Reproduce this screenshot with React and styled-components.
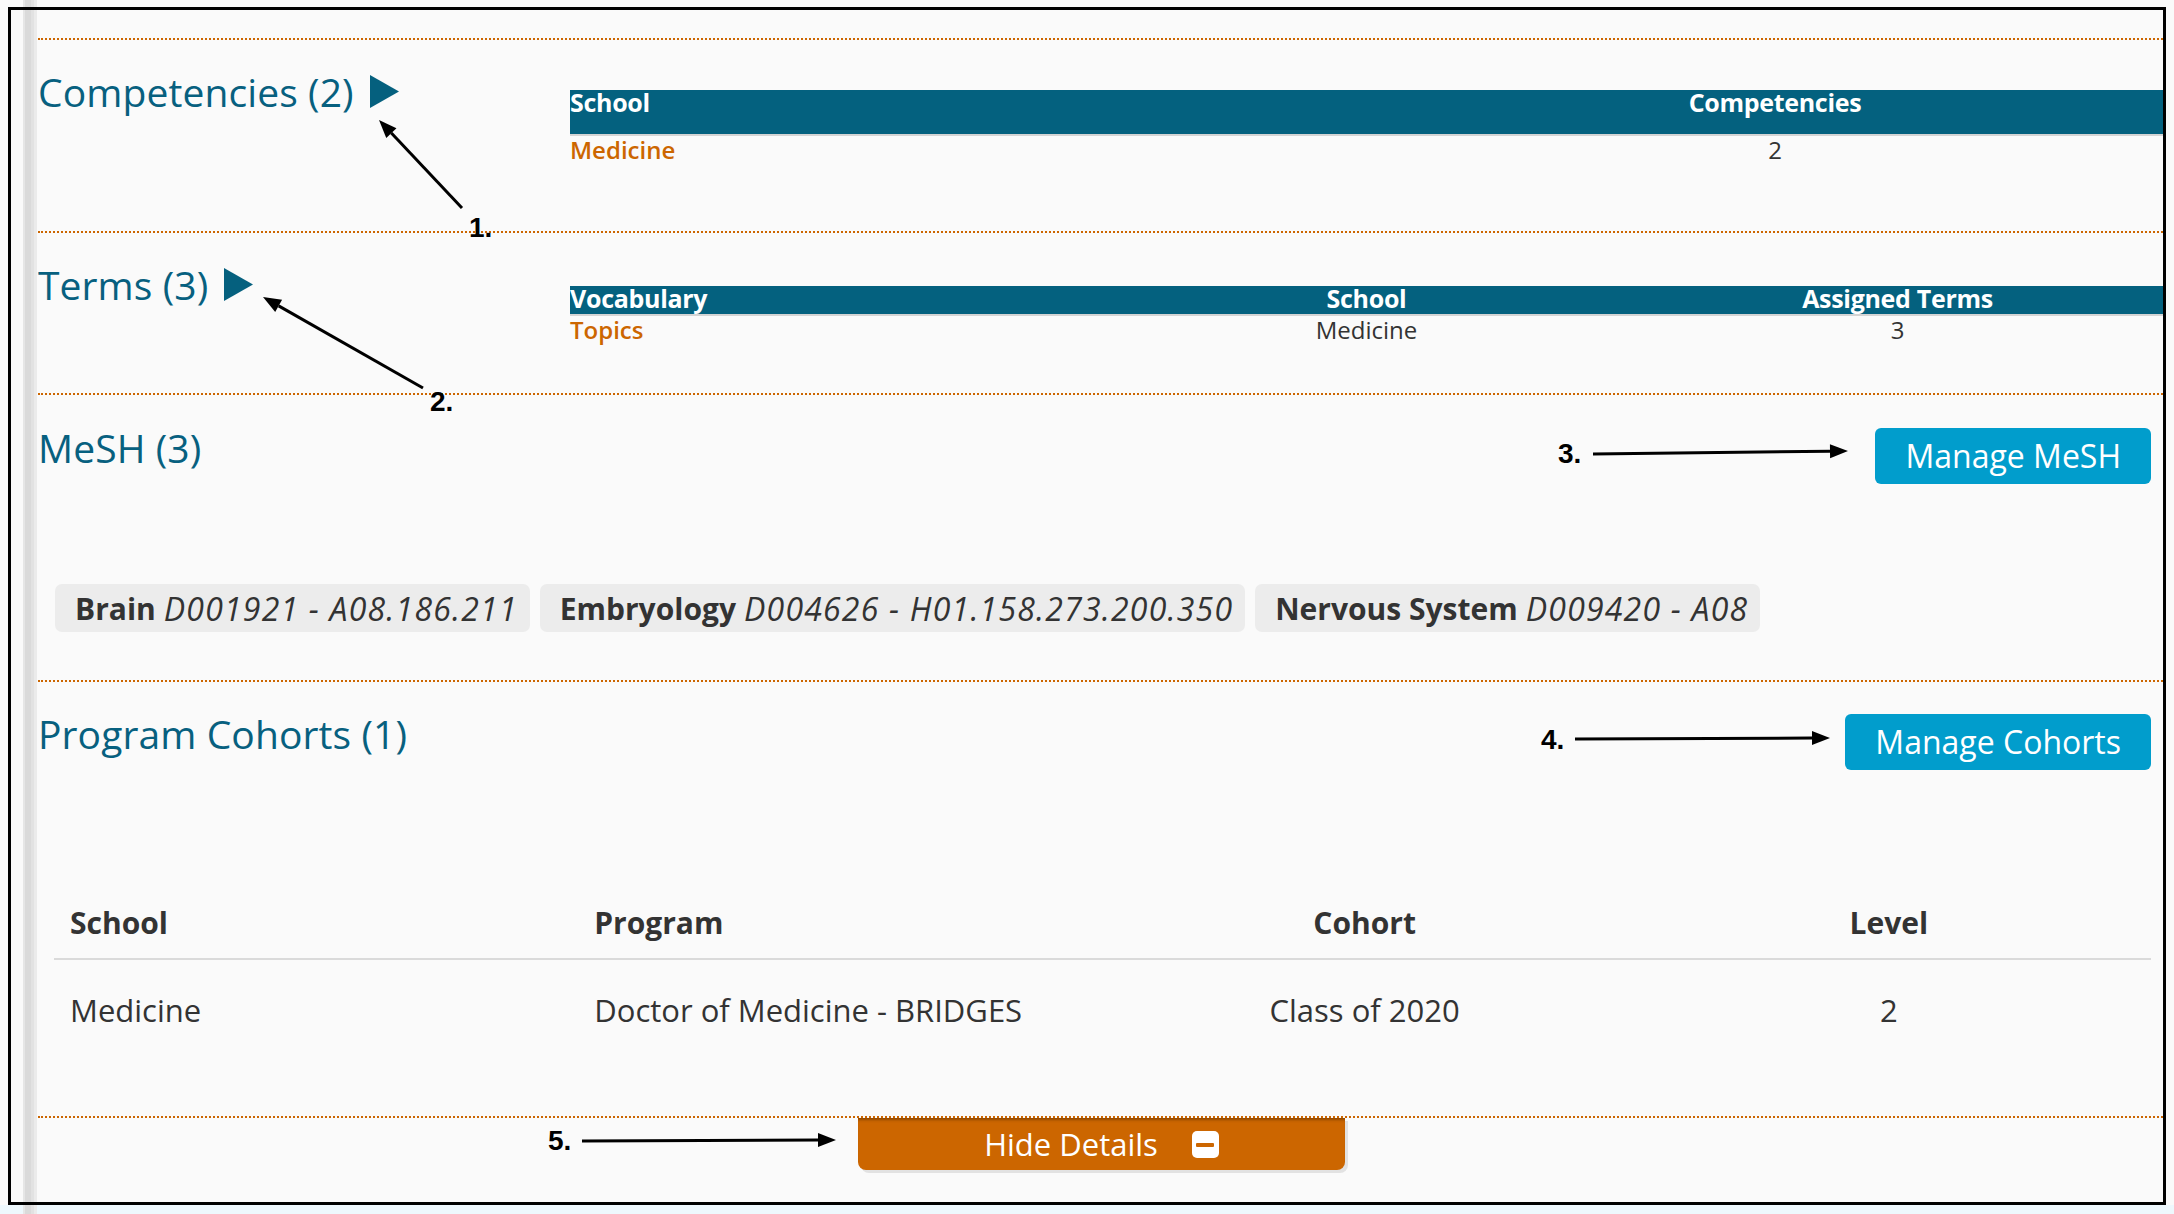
import React from "react";
import styled, { createGlobalStyle } from "styled-components";

const GlobalStyle = createGlobalStyle`
  html, body {
    margin: 0;
    padding: 0;
  }
  body {
    width: 2174px;
    height: 1214px;
    overflow: hidden;
    font-family: "Open Sans", "Noto Sans", sans-serif;
    color: #333;
    background:
      linear-gradient(to right, transparent 0 23px, #e6e6e6 23px 25px, #dadada 25px 31px, #e2e2e2 31px 34px, #ebebeb 34px 37px, transparent 37px),
      linear-gradient(to bottom, #fafafa 0 1205px, #eef8fd 1205px);
  }
`;

const Page = styled.div`
  position: relative;
  box-sizing: border-box;
  width: 2174px;
  height: 1214px;
  padding: 7px 0 0 8px;
`;

const Frame = styled.div`
  box-sizing: border-box;
  width: 2158px;
  height: 1198px;
  border: 3px solid #000;
  padding: 28px 0 0 27px;
  display: flex;
  flex-direction: column;
`;

const Section = styled.section`
  border-top: 2px dotted #cc6600;
  min-height: ${props => props.$h}px;
`;

const SplitRow = styled.div`
  display: flex;
  align-items: flex-start;
`;

const Side = styled.div`
  width: 532px;
  flex: none;
`;

const HeaderRow = styled.div`
  display: flex;
  justify-content: space-between;
  align-items: flex-start;
  padding-right: 12px;
`;

const Heading = styled.h2`
  margin: 0;
  padding-top: ${props => props.$pad ?? 29}px;
  font-size: 39px;
  font-weight: 500;
  line-height: 46px;
  letter-spacing: 0.1px;
  color: #07607f;
  white-space: nowrap;
`;

const Caret = styled.svg`
  width: 29px;
  height: 33px;
  margin-left: 16px;
  vertical-align: -1px;
  fill: #05607e;
`;

const SummaryTable = styled.div`
  flex: 1;
  margin-top: ${props => props.$top}px;
  display: grid;
  grid-template-columns: ${props => props.$cols};
`;

const BarCell = styled.div`
  background: #04617f;
  color: #fff;
  font-size: 25px;
  font-weight: 700;
  line-height: 24px;
  height: ${props => props.$h}px;
  border-bottom: 2px solid #d4d4d4;
  text-align: ${props => (props.$left ? "left" : "center")};
  letter-spacing: -0.3px;
`;

const DataCell = styled.div`
  font-size: 24px;
  line-height: 28px;
  text-align: ${props => (props.$left ? "left" : "center")};
  color: ${props => (props.$link ? "#cc6600" : "#333")};
  font-weight: ${props => (props.$link ? 600 : 400)};
`;

const ActionButton = styled.button`
  margin-top: ${props => props.$top}px;
  height: 56px;
  padding: 0 30px;
  border: 0;
  border-radius: 6px;
  background: #019dcc;
  color: #fff;
  font-family: inherit;
  font-size: 32px;
  line-height: 56px;
  cursor: pointer;
`;

const TagList = styled.div`
  display: flex;
  gap: 10px;
  margin-top: 100px;
  padding-left: 17px;
`;

const Tag = styled.span`
  display: inline-flex;
  align-items: center;
  height: 48px;
  padding: 0 12px 0 20px;
  border-radius: 7px;
  background: #ececec;
  color: #333;
  font-size: 30px;
  white-space: nowrap;
  b {
    font-weight: 700;
    margin-right: 8px;
  }
  i {
    font-style: italic;
    font-size: 32px;
    letter-spacing: 1.2px;
  }
`;

const CohortTable = styled.div`
  margin: 123px 12px 0 16px;
  display: grid;
  grid-template-columns: repeat(4, 1fr);
`;

const CohortHead = styled.div`
  padding: 9px 16px 14px;
  font-size: 30px;
  font-weight: 700;
  line-height: 42px;
  color: #333;
  border-bottom: 2px solid #dadada;
  text-align: ${props => (props.$left ? "left" : "center")};
`;

const CohortCell = styled.div`
  padding: 28px 16px 0;
  font-size: 31px;
  line-height: 44px;
  color: #333;
  text-align: ${props => (props.$left ? "left" : "center")};
`;

const Footer = styled.div`
  border-top: 2px dotted #cc6600;
  display: flex;
  justify-content: center;
  padding-left: 2px;
`;

const HideButton = styled.button`
  display: flex;
  align-items: center;
  justify-content: center;
  gap: 34px;
  width: 487px;
  height: 52px;
  border: 0;
  border-radius: 0 0 8px 8px;
  background: #cc6600;
  color: #fff;
  font-family: inherit;
  font-size: 31px;
  box-shadow: inset 0 4px 3px -2px rgba(0, 0, 0, 0.3), 3px 3px 0 #e2e2e2;
  cursor: pointer;
`;

const MinusBox = styled.span`
  position: relative;
  width: 27px;
  height: 27px;
  border-radius: 5px;
  background: #fff;
  &::after {
    content: "";
    position: absolute;
    left: 4px;
    right: 5px;
    top: 12px;
    height: 4px;
    background: #cc6600;
    border-radius: 1px;
  }
`;

const Overlay = styled.svg`
  position: absolute;
  left: 0;
  top: 0;
  width: 2174px;
  height: 1214px;
  pointer-events: none;
`;

const Label = styled.span`
  position: absolute;
  left: ${props => props.$x}px;
  top: ${props => props.$y}px;
  font-family: "Liberation Sans", Arial, sans-serif;
  font-weight: 700;
  font-size: 28px;
  line-height: 28px;
  color: #000;
`;

const arrows = [
  { x1: 462, y1: 208, x2: 379, y2: 120 },
  { x1: 423, y1: 388, x2: 263, y2: 297 },
  { x1: 1593, y1: 454, x2: 1848, y2: 451 },
  { x1: 1575, y1: 739, x2: 1830, y2: 738 },
  { x1: 582, y1: 1141, x2: 836, y2: 1140 },
];

const labels = [
  { text: "1.", x: 469, y: 214 },
  { text: "2.", x: 430, y: 388 },
  { text: "3.", x: 1558, y: 440 },
  { text: "4.", x: 1541, y: 726 },
  { text: "5.", x: 548, y: 1127 },
];

const Arrow = ({ x1, y1, x2, y2 }) => {
  const dx = x2 - x1;
  const dy = y2 - y1;
  const len = Math.hypot(dx, dy);
  const ux = dx / len;
  const uy = dy / len;
  const bx = x2 - ux * 18;
  const by = y2 - uy * 18;
  const head = [
    `${x2},${y2}`,
    `${bx - uy * 7},${by + ux * 7}`,
    `${bx + uy * 7},${by - ux * 7}`,
  ].join(" ");
  return (
    <g>
      <line x1={x1} y1={y1} x2={bx} y2={by} stroke="#000" strokeWidth="3" />
      <polygon points={head} fill="#000" />
    </g>
  );
};

const Triangle = () => (
  <Caret viewBox="0 0 29 33">
    <polygon points="0,0 29,16.5 0,33" />
  </Caret>
);

const meshTerms = [
  { name: "Brain", code: "D001921 - A08.186.211" },
  { name: "Embryology", code: "D004626 - H01.158.273.200.350" },
  { name: "Nervous System", code: "D009420 - A08" },
];

export default function App() {
  return (
    <>
      <GlobalStyle />
      <Page>
        <Frame>
          <Section $h={191}>
            <SplitRow>
              <Side>
                <Heading>
                  Competencies (2)
                  <Triangle />
                </Heading>
              </Side>
              <SummaryTable $top={50} $cols="817px 1fr">
                <BarCell $h={44} $left>School</BarCell>
                <BarCell $h={44}>Competencies</BarCell>
                <DataCell $left $link>Medicine</DataCell>
                <DataCell>2</DataCell>
              </SummaryTable>
            </SplitRow>
          </Section>

          <Section $h={160}>
            <SplitRow>
              <Side>
                <Heading>
                  Terms (3)
                  <Triangle />
                </Heading>
              </Side>
              <SummaryTable $top={53} $cols="1fr 1fr 1fr">
                <BarCell $h={28} $left>Vocabulary</BarCell>
                <BarCell $h={28}>School</BarCell>
                <BarCell $h={28}>Assigned Terms</BarCell>
                <DataCell $left $link>Topics</DataCell>
                <DataCell>Medicine</DataCell>
                <DataCell>3</DataCell>
              </SummaryTable>
            </SplitRow>
          </Section>

          <Section $h={285}>
            <HeaderRow>
              <Heading $pad={30}>MeSH (3)</Heading>
              <ActionButton $top={33}>Manage MeSH</ActionButton>
            </HeaderRow>
            <TagList>
              {meshTerms.map(term => (
                <Tag key={term.name}>
                  <b>{term.name}</b>
                  <i>{term.code}</i>
                </Tag>
              ))}
            </TagList>
          </Section>

          <Section $h={434}>
            <HeaderRow>
              <Heading>Program Cohorts (1)</Heading>
              <ActionButton $top={32}>Manage Cohorts</ActionButton>
            </HeaderRow>
            <CohortTable>
              <CohortHead $left>School</CohortHead>
              <CohortHead $left>Program</CohortHead>
              <CohortHead>Cohort</CohortHead>
              <CohortHead>Level</CohortHead>
              <CohortCell $left>Medicine</CohortCell>
              <CohortCell $left>Doctor of Medicine - BRIDGES</CohortCell>
              <CohortCell>Class of 2020</CohortCell>
              <CohortCell>2</CohortCell>
            </CohortTable>
          </Section>

          <Footer>
            <HideButton>
              Hide Details
              <MinusBox />
            </HideButton>
          </Footer>
        </Frame>

        <Overlay viewBox="0 0 2174 1214">
          {arrows.map((a, i) => (
            <Arrow key={i} {...a} />
          ))}
        </Overlay>
        {labels.map(l => (
          <Label key={l.text} $x={l.x} $y={l.y}>{l.text}</Label>
        ))}
      </Page>
    </>
  );
}
